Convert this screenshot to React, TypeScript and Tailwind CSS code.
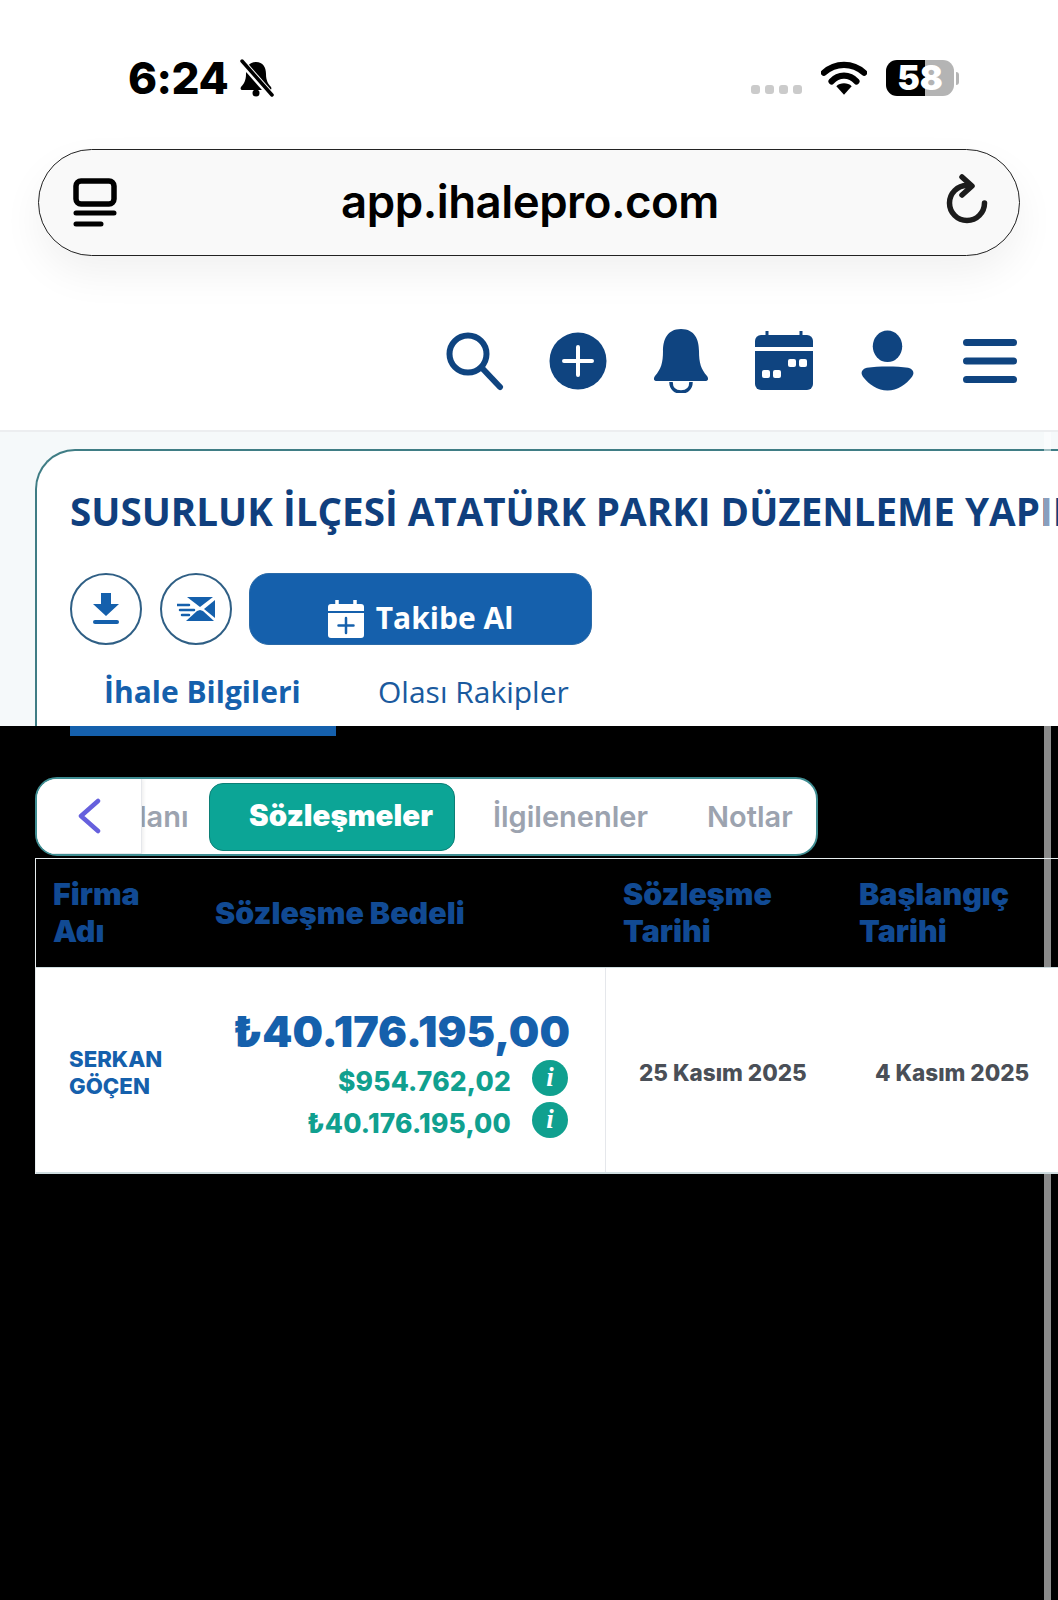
import React from "react";

const navy = "#0f4480";

function Info() {
  return (
    <span className="flex h-[36px] w-[36px] shrink-0 items-center justify-center rounded-full bg-[#10a08f] text-[27px] font-bold italic leading-none text-white [font-family:'Liberation_Serif',serif]">
      i
    </span>
  );
}

function TopIcons() {
  return (
    <div className="flex h-[126px] items-start justify-end border-b-2 border-[#eceef0] bg-white pr-[41px] pt-[23px]">
      <div className="flex items-center">
        <svg width="60" height="60" viewBox="0 0 60 60">
          <circle cx="23" cy="23" r="18.5" fill="none" stroke={navy} strokeWidth="6" />
          <path d="M37 37 L55 56" stroke={navy} strokeWidth="6" strokeLinecap="round" />
        </svg>
        <svg width="58" height="58" viewBox="0 0 58 58" className="ml-[44px]">
          <circle cx="29" cy="29" r="28.5" fill={navy} />
          <path d="M29 15V43M15 29H43" stroke="#fff" strokeWidth="4" strokeLinecap="round" />
        </svg>
        <svg width="56" height="64" viewBox="0 0 56 64" className="ml-[46px]">
          <path d="M28 0C14 0 10 11 10 22C10 34 8 40 2 47C0 50 1 52 4 52H52C55 52 56 50 54 47C48 40 46 34 46 22C46 11 42 0 28 0Z" fill={navy} />
          <path d="M18 53C18 60 23 63 28 63C33 63 38 60 38 53" fill="none" stroke={navy} strokeWidth="3.5" />
        </svg>
        <svg width="58" height="60" viewBox="0 0 58 60" className="ml-[46px]">
          <path d="M12 0V6M46 0V6" stroke={navy} strokeWidth="3" strokeLinecap="round" />
          <path d="M6 4H52A6 6 0 0 1 58 10V16H0V10A6 6 0 0 1 6 4Z" fill={navy} />
          <path d="M0 20H58V53A6 6 0 0 1 52 59H6A6 6 0 0 1 0 53Z" fill={navy} />
          <rect x="7" y="39" width="8" height="8" rx="2" fill="#fff" />
          <rect x="18" y="39" width="8" height="8" rx="2" fill="#fff" />
          <rect x="33" y="28" width="8" height="8" rx="2" fill="#fff" />
          <rect x="44" y="28" width="8" height="8" rx="2" fill="#fff" />
        </svg>
        <svg width="53" height="62" viewBox="0 0 54 62" className="ml-[48px]">
          <ellipse cx="27" cy="16" rx="15" ry="16" fill={navy} />
          <path d="M6 38C18 36 36 36 48 38C53 39 55 43 52 47C46 55 37 61 27 61C17 61 8 55 2 47C-1 43 1 39 6 38Z" fill={navy} />
        </svg>
        <svg width="54" height="44" viewBox="0 0 54 44" className="ml-[49px]">
          <path d="M3.5 3.5H50.5M3.5 22H50.5M3.5 40.5H50.5" stroke={navy} strokeWidth="7" strokeLinecap="round" />
        </svg>
      </div>
    </div>
  );
}

export default function App() {
  return (
    <div className="relative h-[1600px] w-[1058px] overflow-hidden bg-black [font-family:Inter,sans-serif]">
      {/* Status bar and address bar */}
      <div className="bg-white">
        <div className="flex h-[149px] items-start justify-between pl-[128px] pr-[99px] pt-[52px]">
          <div className="flex items-center gap-[9px]">
            <span className="text-[44px] font-extrabold leading-[52px] tracking-[-0.5px] text-black">6:24</span>
            <svg width="38" height="38" viewBox="0 0 38 38">
              <path d="M19 3C12 3 9 8 9 15C9 21 7 25 4 28C3 30 4 31 6 31H32C34 31 35 30 34 28C31 25 29 21 29 15C29 8 26 3 19 3Z" fill="#000" />
              <circle cx="19" cy="34" r="3.5" fill="#000" />
              <path d="M4 2L34 36" stroke="#fdfdfd" strokeWidth="7" />
              <path d="M5 2L35 36" stroke="#000" strokeWidth="3.5" strokeLinecap="round" />
            </svg>
          </div>
          <div className="flex items-center pt-[8px]">
            <div className="mt-[22px] flex gap-[5px]">
              <span className="h-[9px] w-[9px] rounded-[3px] bg-[#cbcbcb]" />
              <span className="h-[9px] w-[9px] rounded-[3px] bg-[#cbcbcb]" />
              <span className="h-[9px] w-[9px] rounded-[3px] bg-[#cbcbcb]" />
              <span className="h-[9px] w-[9px] rounded-[3px] bg-[#cbcbcb]" />
            </div>
            <svg width="46" height="35" viewBox="0 0 48 36" className="ml-[19px] mr-[1px]">
              <path d="M3 12C15 1 33 1 45 12" fill="none" stroke="#000" strokeWidth="6.5" strokeLinecap="round" />
              <path d="M11 21C18 13 30 13 37 21" fill="none" stroke="#000" strokeWidth="6.5" strokeLinecap="round" />
              <path d="M16 26C20 22 28 22 32 26L24 35Z" fill="#000" />
            </svg>
            <div className="ml-[18px] flex items-center">
              <div className="flex h-[36px] w-[68px] items-center justify-center rounded-[11px] bg-[linear-gradient(90deg,#000_0,#000_57%,#b4b4b4_57%,#b4b4b4_100%)] text-[34px] font-black leading-none text-white">
                58
              </div>
              <span className="ml-[2px] h-[13px] w-[3px] rounded-r-full bg-[#b4b4b4]" />
            </div>
          </div>
        </div>
        <div className="px-[38px] pb-[50px]">
          <div className="flex h-[107px] items-center justify-between rounded-[54px] border border-[#222] bg-[#f9f9f9] pl-[34px] pr-[31px] shadow-[0_18px_40px_rgba(0,0,0,0.06)]">
            <svg width="44" height="50" viewBox="0 0 44 50">
              <rect x="3" y="3" width="38" height="23" rx="5" fill="none" stroke="#000" strokeWidth="5.5" />
              <path d="M3 35H41M3 46H28" stroke="#000" strokeWidth="5" strokeLinecap="round" />
            </svg>
            <span className="mb-[2px] pr-[3px] text-[45.6px] font-semibold leading-none tracking-[-0.5px] text-black">
              app.ihalepro.com
            </span>
            <svg width="42" height="50" viewBox="0 0 42 50" className="mb-[8px]">
              <path d="M21 11.5A17.5 17.5 0 1 0 38.5 29" fill="none" stroke="#1c1c1c" strokeWidth="5.5" strokeLinecap="round" />
              <path d="M16 3L26 12L16 21" fill="none" stroke="#1c1c1c" strokeWidth="5.5" strokeLinecap="round" strokeLinejoin="round" />
            </svg>
          </div>
        </div>
      </div>

      <TopIcons />

      {/* Tender card */}
      <div className="h-[294px] bg-[#f5f9fa] pl-[35px] pt-[17px] [font-family:'Open_Sans',sans-serif]">
        <div className="h-[277px] overflow-hidden rounded-tl-[40px] border-l-2 border-t-2 border-[#3f7d85] bg-white pl-[33px] pt-[35px]">
          <h1 className="whitespace-nowrap text-[38.6px] font-bold leading-[50px] text-[#103f7e]">
            SUSURLUK İLÇESİ ATATÜRK PARKI DÜZENLEME YAPIM İŞİ
          </h1>
          <div className="mt-[37px] flex items-center">
            <div className="flex h-[72px] w-[72px] items-center justify-center rounded-full border-2 border-[#2f5f85]">
              <svg width="28" height="32" viewBox="0 0 28 32">
                <path d="M9 0H19V11H27L14 23L1 11H9Z" fill="#1560ac" />
                <rect x="1" y="27" width="26" height="4" rx="2" fill="#1560ac" />
              </svg>
            </div>
            <div className="ml-[18px] flex h-[72px] w-[72px] items-center justify-center rounded-full border-2 border-[#2f5f85]">
              <svg width="38" height="24" viewBox="0 0 38 24">
                <path d="M10 0H36L23 10Z" fill="#1560ac" />
                <path d="M38 3V21L27 12Z" fill="#1560ac" />
                <path d="M9 24L20 14L23 13L26 14L37 24Z" fill="#1560ac" />
                <path d="M0 8H12M3 13H17M5 18H12" stroke="#1560ac" strokeWidth="2.5" strokeLinecap="round" />
              </svg>
            </div>
            <button className="ml-[17px] flex h-[72px] w-[343px] items-end justify-center gap-[12px] rounded-[20px] border border-[#2a6aa8] bg-[#1560ac] pb-[4px] text-[30px] font-bold leading-[44px] text-white">
              <svg width="36" height="38" viewBox="0 0 36 38" className="mb-[2px]">
                <path d="M9 0V6M27 0V6" stroke="#fff" strokeWidth="3.5" strokeLinecap="round" />
                <path d="M3 4H33A3 3 0 0 1 36 7V11H0V7A3 3 0 0 1 3 4Z" fill="#fff" />
                <path d="M0 13H36V35A3 3 0 0 1 33 38H3A3 3 0 0 1 0 35Z" fill="#fff" />
                <path d="M18 18V33M10.5 25.5H25.5" stroke="#1560ac" strokeWidth="2.5" strokeLinecap="round" />
              </svg>
              <span>Takibe Al</span>
            </button>
          </div>
          <div className="mt-[25px] flex text-[30px] leading-[44px]">
            <span className="w-[266px] pl-[34px] font-bold text-[#1560ac]">İhale Bilgileri</span>
            <span className="pl-[42px] text-[#1a5a9e]">Olası Rakipler</span>
          </div>
        </div>
      </div>

      {/* Faint scrollbar over the light part */}
      <div className="absolute right-[7px] top-[432px] h-[293px] w-[7px] bg-white/50" />

      {/* Black lower region */}
      <div className="relative h-[874px]">
        <div className="ml-[70px] h-[10px] w-[266px] bg-[#1560ac]" />
        <div className="absolute inset-y-0 right-[7px] w-[7px] bg-[#8a8a8a]" />

        <div className="relative ml-[35px] mt-[41px] flex h-[79px] w-[783px] items-center overflow-hidden rounded-[22px] border-2 border-[#3f8d92] bg-white text-[29px] font-semibold text-[#9ca3af]">
          <div className="absolute inset-y-0 left-0 flex w-[105px] items-center justify-center border-b border-r border-[#e5e7eb] bg-white shadow-[2px_0_3px_rgba(0,0,0,0.06)]">
            <svg width="24" height="36" viewBox="0 0 24 36">
              <path d="M21 3L4 18L21 33" fill="none" stroke="#6660dd" strokeWidth="4.5" strokeLinecap="round" strokeLinejoin="round" />
            </svg>
          </div>
          <span className="ml-[102px] w-[70px]">lanı</span>
          <span className="flex h-[68px] w-[246px] items-center justify-center rounded-[14px] border border-[#0c7f76] bg-[#0ca596] pb-[2px] pl-[18px] text-[29.5px] font-black text-white">
            Sözleşmeler
          </span>
          <span className="ml-[38px]">İlgilenenler</span>
          <span className="ml-[59px]">Notlar</span>
        </div>

        {/* Table */}
        <div className="relative ml-[35px] mt-[2px] border-l border-t border-[#e8eef0]">
          <div className="flex h-[108px] items-center text-[30.4px] font-black leading-[37px] text-[#114a93]">
            <div className="w-[178px] pl-[17px]">Firma<br />Adı</div>
            <div className="w-[409px] whitespace-nowrap pl-[1px]">Sözleşme Bedeli</div>
            <div className="w-[236px]">Sözleşme<br />Tarihi</div>
            <div>Başlangıç<br />Tarihi</div>
          </div>
          <div className="flex h-[207px] items-center border-b-2 border-t border-[#cfdde0] bg-white">
            <div className="w-[176px] pl-[33px] pt-[4px] text-[22.2px] font-extrabold leading-[27px] text-[#1560ac]">
              SERKAN<br />GÖÇEN
            </div>
            <div className="flex h-full w-[394px] flex-col items-end justify-center border-r border-[#e5e7eb] pr-[35px] pt-[3px]">
              <div className="text-[43px] font-black leading-[50px] text-[#1560ac]">₺40.176.195,00</div>
              <div className="mr-[2px] mt-[4px] flex items-center gap-[21px] text-[26.4px] font-extrabold leading-[36px] tracking-[0.2px] text-[#10a08f]">
                <span className="translate-y-[3px]">$954.762,02</span>
                <Info />
              </div>
              <div className="mr-[2px] mt-[6px] flex items-center gap-[21px] text-[26.4px] font-extrabold leading-[36px] tracking-[0.2px] text-[#10a08f]">
                <span className="translate-y-[3px]">₺40.176.195,00</span>
                <Info />
              </div>
            </div>
            <div className="flex pt-[6px] text-[22.5px] font-extrabold text-[#4a4f57]">
              <span className="ml-[33px] w-[236px] whitespace-nowrap">25 Kasım 2025</span>
              <span className="whitespace-nowrap">4 Kasım 2025</span>
            </div>
          </div>
        </div>
      </div>
    </div>
  );
}
